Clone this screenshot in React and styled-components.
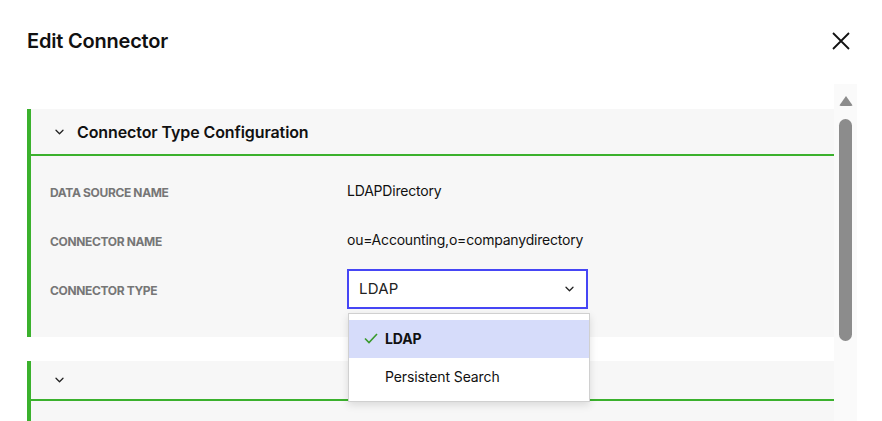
import React, { useState } from 'react'
import styled, { createGlobalStyle } from 'styled-components'

const GlobalStyle = createGlobalStyle`
  body {
    margin: 0;
    font-family: Inter, "Noto Sans", sans-serif;
    color: #111;
    background: #fff;
  }
`

const Dialog = styled.div`
  width: 882px;
  height: 421px;
  background: #fff;
  overflow: hidden;
  display: flex;
  flex-direction: column;
`
const TopBar = styled.div`
  display: flex;
  align-items: center;
  justify-content: space-between;
  height: 84px;
  padding: 0 31px 0 27px;
  box-sizing: border-box;
  padding-bottom: 3px;
`
const Title = styled.h2`
  margin: 0;
  font-size: 20px;
  font-weight: 600;
  letter-spacing: -0.2px;
`
const CloseButton = styled.button`
  border: 0;
  background: none;
  padding: 0;
  width: 20px;
  height: 20px;
  display: flex;
  align-items: center;
  justify-content: center;
  cursor: pointer;
`
const Body = styled.div`
  flex: 1;
  display: flex;
  padding-left: 27px;
  min-height: 0;
`
const Content = styled.div`
  width: 807px;
  padding-top: 25px;
  position: relative;
`
const Scrollbar = styled.div`
  width: 23px;
  background: #fafafa;
  display: flex;
  flex-direction: column;
  align-items: center;
  padding-top: 12px;
  box-sizing: border-box;
`
const Arrow = styled.div`
  width: 0;
  height: 0;
  border-left: 7px solid transparent;
  border-right: 7px solid transparent;
  border-bottom: 10px solid #8c8c8c;
  margin-bottom: 13px;
  border-radius: 2px;
`
const Thumb = styled.div`
  width: 13px;
  height: 222px;
  border-radius: 7px;
  background: #8c8c8c;
`
const Panel = styled.section`
  background: #f7f7f7;
  border-left: 4px solid #3bb12d;
  margin-bottom: 24px;
`
const PanelHeader = styled.div`
  display: flex;
  align-items: center;
  gap: 13px;
  height: ${p => p.$short ? 38 : 45}px;
  padding-left: 24px;
  border-bottom: 2px solid #3bb12d;
  font-size: 16px;
  font-weight: 600;
  letter-spacing: -0.1px;
`
const PanelBody = styled.div`
  padding: 10px 0 24px 19px;
  min-height: ${p => p.$min || 0}px;
`
const Row = styled.div`
  display: grid;
  grid-template-columns: 297px 1fr;
  align-items: center;
  height: 49px;
`
const Label = styled.span`
  font-size: 12px;
  font-weight: 700;
  color: #767676;
  letter-spacing: -0.35px;
  padding-top: 3px;
`
const Value = styled.span`
  font-size: 14px;
  letter-spacing: -0.2px;
  color: #111;
`
const SelectWrap = styled.div`
  position: relative;
  width: 241px;
`
const SelectBox = styled.button`
  width: 241px;
  height: 40px;
  box-sizing: border-box;
  border: 2px solid #4646f5;
  background: #fff;
  display: flex;
  align-items: center;
  justify-content: space-between;
  padding: 0 12px 0 10px;
  font-family: inherit;
  font-size: 15px;
  color: #222;
  letter-spacing: 0.2px;
  cursor: pointer;
`
const Menu = styled.ul`
  position: absolute;
  z-index: 2;
  top: 44px;
  left: 1px;
  width: 242px;
  box-sizing: border-box;
  margin: 0;
  padding: 6px 0 5px;
  list-style: none;
  background: #fff;
  border: 1px solid #d0d0d0;
  box-shadow: 0 3px 8px rgba(0, 0, 0, 0.12);
`
const Option = styled.li`
  display: flex;
  align-items: center;
  height: 38px;
  padding-left: 36px;
  position: relative;
  font-size: 14px;
  font-weight: ${p => p.$selected ? 700 : 400};
  background: ${p => p.$selected ? '#d6dcfa' : '#fff'};
  letter-spacing: -0.1px;
  cursor: pointer;
`
const Check = styled.svg`
  position: absolute;
  left: 15px;
  top: 13px;
`

const Chevron = ({ size = 9 }) => (
  <svg width={size} height={6} viewBox="0 0 9 6" fill="none">
    <path d="M1 1.2l3.5 3.5L8 1.2" stroke="#222" strokeWidth="1.3" strokeLinecap="round" strokeLinejoin="round" />
  </svg>
)

const options = ['LDAP', 'Persistent Search']

export default function App() {
  const [type, setType] = useState('LDAP')
  const [open, setOpen] = useState(true)

  return (
    <Dialog>
      <GlobalStyle />
      <TopBar>
        <Title>Edit Connector</Title>
        <CloseButton aria-label="Close">
          <svg width="18" height="18" viewBox="0 0 18 18">
            <path d="M1 1l16 16M17 1L1 17" stroke="#111" strokeWidth="1.8" />
          </svg>
        </CloseButton>
      </TopBar>
      <Body>
        <Content>
          <Panel>
            <PanelHeader>
              <Chevron />
              Connector Type Configuration
            </PanelHeader>
            <PanelBody>
              <Row>
                <Label>DATA SOURCE NAME</Label>
                <Value>LDAPDirectory</Value>
              </Row>
              <Row>
                <Label>CONNECTOR NAME</Label>
                <Value>ou=Accounting,o=companydirectory</Value>
              </Row>
              <Row>
                <Label>CONNECTOR TYPE</Label>
                <SelectWrap>
                  <SelectBox onClick={() => setOpen(!open)}>
                    {type}
                    <Chevron />
                  </SelectBox>
                  {open && (
                    <Menu>
                      {options.map(o => (
                        <Option key={o} $selected={o === type} onClick={() => setType(o)}>
                          {o === type && (
                            <Check width="14" height="11" viewBox="0 0 14 11" fill="none">
                              <path d="M1 5.5l4 4L13 1" stroke="#3a9a2c" strokeWidth="1.6" />
                            </Check>
                          )}
                          {o}
                        </Option>
                      ))}
                    </Menu>
                  )}
                </SelectWrap>
              </Row>
            </PanelBody>
          </Panel>
          <Panel>
            <PanelHeader $short>
              <Chevron />
            </PanelHeader>
            <PanelBody $min={60} />
          </Panel>
        </Content>
        <Scrollbar>
          <Arrow />
          <Thumb />
        </Scrollbar>
      </Body>
    </Dialog>
  )
}
